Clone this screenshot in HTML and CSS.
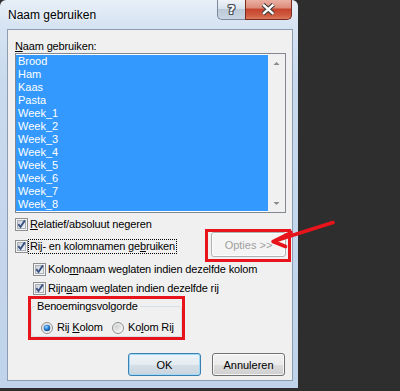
FILE: index.html
```html
<!DOCTYPE html>
<html lang="nl">
<head>
<meta charset="utf-8">
<title>Naam gebruiken</title>
<link rel="stylesheet" href="styles.css">
</head>
<body>
<svg class="defs" width="0" height="0" aria-hidden="true">
  <defs>
    <linearGradient id="cbIn" x1="0" y1="0" x2="1" y2="1">
      <stop offset="0" stop-color="#c9ced6"/>
      <stop offset="1" stop-color="#f6f7f8"/>
    </linearGradient>
    <linearGradient id="rbOut" x1="0" y1="0" x2="1" y2="1">
      <stop offset="0" stop-color="#dcdcdc"/>
      <stop offset="1" stop-color="#fdfdfd"/>
    </linearGradient>
    <radialGradient id="rbDot" cx="0.4" cy="0.35" r="0.75">
      <stop offset="0" stop-color="#a6dcff"/>
      <stop offset="0.45" stop-color="#2b82d6"/>
      <stop offset="1" stop-color="#123f78"/>
    </radialGradient>
    <linearGradient id="rbOff" x1="0" y1="0" x2="1" y2="1">
      <stop offset="0" stop-color="#c7c9cc"/>
      <stop offset="1" stop-color="#f3f3f3"/>
    </linearGradient>
  </defs>
</svg>

<div class="window">
  <div class="titlebar">
    <span class="title">Naam gebruiken</span>
    <div class="caption">
      <span class="cap-help">?</span>
      <span class="cap-close">
        <svg width="47" height="20" viewBox="0 0 47 20">
          <path d="M18.5 4.5 L29 14 M29 4.5 L18.5 14" stroke="#3a3a3a" stroke-width="4.6" fill="none"/>
          <path d="M18.5 4.5 L29 14 M29 4.5 L18.5 14" stroke="#ffffff" stroke-width="2.4" fill="none"/>
        </svg>
      </span>
    </div>
  </div>

  <div class="client">
    <div class="label"><u>N</u>aam gebruiken:</div>

    <div class="listbox">
      <ul class="items">
        <li>Brood</li>
        <li>Ham</li>
        <li>Kaas</li>
        <li>Pasta</li>
        <li>Week_1</li>
        <li>Week_2</li>
        <li>Week_3</li>
        <li>Week_4</li>
        <li>Week_5</li>
        <li>Week_6</li>
        <li>Week_7</li>
        <li>Week_8</li>
      </ul>
      <div class="vscroll">
        <svg width="17" height="17" viewBox="0 0 17 17"><path d="M5.5 11 L8.5 8 L11.5 11 Z" fill="#8a8a8a"/></svg>
        <svg width="17" height="17" viewBox="0 0 17 17"><path d="M5.5 7 L8.5 10 L11.5 7 Z" fill="#8a8a8a"/></svg>
      </div>
    </div>

    <label class="check row1">
      <svg class="cb" width="13" height="13" viewBox="0 0 13 13"><rect x="0.5" y="0.5" width="12" height="12" fill="#f4f4f4" stroke="#8e8f8f"/><rect x="2.5" y="2.5" width="8" height="8" fill="url(#cbIn)" stroke="#aab0b8"/><path d="M3.3 6.2 L5.5 9 L9.9 2.4" fill="none" stroke="#3a5384" stroke-width="1.9"/></svg>
      <span class="txt"><u>R</u>elatief/absoluut negeren</span>
    </label>

    <div class="row2">
      <label class="check">
        <svg class="cb" width="13" height="13" viewBox="0 0 13 13"><rect x="0.5" y="0.5" width="12" height="12" fill="#f4f4f4" stroke="#8e8f8f"/><rect x="2.5" y="2.5" width="8" height="8" fill="url(#cbIn)" stroke="#aab0b8"/><path d="M3.3 6.2 L5.5 9 L9.9 2.4" fill="none" stroke="#3a5384" stroke-width="1.9"/></svg>
        <span class="txt focus">Rij- en kolomnamen ge<u>b</u>ruiken</span>
      </label>
      <div class="mark mark-opties">
        <button class="btn btn-disabled" type="button" disabled>Opties &gt;&gt;</button>
      </div>
    </div>

    <label class="check row3 indent">
      <svg class="cb" width="13" height="13" viewBox="0 0 13 13"><rect x="0.5" y="0.5" width="12" height="12" fill="#f4f4f4" stroke="#8e8f8f"/><rect x="2.5" y="2.5" width="8" height="8" fill="url(#cbIn)" stroke="#aab0b8"/><path d="M3.3 6.2 L5.5 9 L9.9 2.4" fill="none" stroke="#3a5384" stroke-width="1.9"/></svg>
      <span class="txt">Kolo<u>m</u>naam weglaten indien dezelfde kolom</span>
    </label>

    <label class="check row4 indent">
      <svg class="cb" width="13" height="13" viewBox="0 0 13 13"><rect x="0.5" y="0.5" width="12" height="12" fill="#f4f4f4" stroke="#8e8f8f"/><rect x="2.5" y="2.5" width="8" height="8" fill="url(#cbIn)" stroke="#aab0b8"/><path d="M3.3 6.2 L5.5 9 L9.9 2.4" fill="none" stroke="#3a5384" stroke-width="1.9"/></svg>
      <span class="txt">Rijn<u>a</u>am weglaten indien dezelfde rij</span>
    </label>

    <div class="mark mark-group">
      <fieldset class="group">
        <legend>Benoemingsvolgorde</legend>
        <div class="radios">
          <label class="radio r1">
            <svg width="12" height="12" viewBox="0 0 12 12"><circle cx="6" cy="6" r="5.5" fill="url(#rbOut)" stroke="#8e8f8f"/><circle cx="6" cy="6" r="3.3" fill="url(#rbDot)"/></svg>
            <span class="txt">Rij <u>K</u>olom</span>
          </label>
          <label class="radio r2">
            <svg width="12" height="12" viewBox="0 0 12 12"><circle cx="6" cy="6" r="5.5" fill="url(#rbOut)" stroke="#8e8f8f"/><circle cx="6" cy="6" r="3.3" fill="url(#rbOff)"/></svg>
            <span class="txt">Ko<u>l</u>om Rij</span>
          </label>
        </div>
      </fieldset>
    </div>

    <div class="buttons">
      <button class="btn btn-default" type="button">OK</button>
      <button class="btn" type="button">Annuleren</button>
    </div>
  </div>
</div>

<svg class="arrow" width="400" height="391" viewBox="0 0 400 391" aria-hidden="true">
  <path d="M333 222.5 L276 240.5" stroke="#e8141b" stroke-width="3.6" fill="none" stroke-linecap="round"/>
  <path d="M291 232.5 L273 241.5 L285.5 246.5" stroke="#e8141b" stroke-width="3.6" fill="none" stroke-linecap="round" stroke-linejoin="round"/>
</svg>
</body>
</html>
```

FILE: styles.css
```css
html, body {
  margin: 0;
  padding: 0;
}

body {
  width: 400px;
  height: 391px;
  overflow: hidden;
  position: relative;
  background: #2e2e2e;
  font-family: "Liberation Sans", Arial, sans-serif;
  font-size: 11px;
  color: #000;
}

.defs {
  position: absolute;
  width: 0;
  height: 0;
}

.window {
  width: 298px;
  height: 388px;
  box-sizing: border-box;
  padding: 0 5px 0 7px;
  border-radius: 6px 6px 0 0;
  background: linear-gradient(#e7eff8 0, #d6e3f2 26px, #c9daee 80px, #bfd3ea 100%);
  display: flex;
  flex-direction: column;
}

/* title bar */
.titlebar {
  height: 29px;
  flex: none;
  display: flex;
  justify-content: space-between;
  align-items: flex-start;
  padding-left: 1px;
  margin-right: 1px;
}

.title {
  margin-top: 8px;
  font-size: 12px;
  line-height: 14px;
  color: #000;
  text-shadow: 0 0 5px rgba(255, 255, 255, 0.9);
}

.caption {
  display: flex;
}

.cap-help,
.cap-close {
  height: 20px;
  box-sizing: border-box;
  display: flex;
  align-items: center;
  justify-content: center;
}

.cap-help {
  width: 28px;
  border: 1px solid #7d8a9b;
  border-top: none;
  border-right: none;
  border-radius: 0 0 0 5px;
  background: linear-gradient(#eef3f8 0%, #d9e2ec 45%, #bcc9d8 50%, #c9d5e2 100%);
  color: #fff;
  font-family: "DejaVu Sans", sans-serif;
  font-weight: bold;
  font-size: 13px;
  line-height: 18px;
  text-shadow: 1px 0 0 #4a4f57, -1px 0 0 #4a4f57, 0 1px 0 #4a4f57, 0 -1px 0 #4a4f57,
    1px 1px 0 #4a4f57, -1px -1px 0 #4a4f57, 1px -1px 0 #4a4f57, -1px 1px 0 #4a4f57;
}

.cap-close {
  width: 47px;
  border: 1px solid #7a2a1e;
  border-top: none;
  border-radius: 0 0 5px 0;
  background: linear-gradient(#eab0a3 0%, #dc8d79 40%, #c7452f 50%, #cd5a3f 80%, #dc7a5c 100%);
}

.cap-close svg {
  display: block;
  margin-left: -1px;
}

/* client area */
.client {
  height: 352px;
  flex: none;
  box-sizing: border-box;
  border: 1px solid #8d9cb0;
  background: #f0f0f0;
  padding: 10px 6px 4px 7px;
  display: flex;
  flex-direction: column;
  align-items: flex-start;
}

.label {
  height: 13px;
  line-height: 13px;
  letter-spacing: -0.15px;
}

.listbox {
  width: 271px;
  height: 160px;
  box-sizing: border-box;
  border: 1px solid #828790;
  background: #fff;
  padding-top: 1px;
  display: flex;
  align-items: stretch;
}

.items {
  list-style: none;
  margin: 0;
  padding: 0;
  flex: 1;
  align-self: flex-start;
}

.items li {
  height: 13px;
  line-height: 13px;
  padding-left: 2px;
  background: #3399ff;
  color: #fff;
}

.vscroll {
  width: 17px;
  margin-top: -1px;
  background: #f0f0f0;
  display: flex;
  flex-direction: column;
  justify-content: space-between;
}

.vscroll svg {
  display: block;
}

/* checkboxes */
.check {
  display: flex;
  align-items: center;
  height: 13px;
}

.check .cb {
  display: block;
  flex: none;
}

.txt {
  line-height: 13px;
  margin-left: 1px;
  padding: 0 1px;
  white-space: nowrap;
  letter-spacing: -0.15px;
}

.row1 {
  margin-top: 5px;
}

.row2 {
  margin-top: 9px;
  width: 271px;
  display: flex;
  justify-content: space-between;
  align-items: flex-start;
}

.focus {
  outline: 1px dotted #000;
  outline-offset: 0;
  height: 13px;
}

.indent {
  margin-left: 18px;
}

.row3 {
  margin-top: 10px;
}

.row4 {
  margin-top: 6px;
}

/* red annotation frames */
.mark {
  box-sizing: border-box;
  border: 3px solid #e8141b;
}

.mark-opties {
  width: 86px;
  height: 33px;
  margin: -11px -5px -9px 0;
  padding: 0 0 0 3px;
}

.mark-group {
  width: 157px;
  height: 44px;
  margin: 1px 0 0 13px;
  padding: 0;
}

/* group box */
.group {
  margin: 1px 0 0 0;
  padding: 0;
  height: 37px;
  box-sizing: border-box;
  border: 1px solid #d5dfe5;
  border-radius: 3px;
  min-width: 0;
}

.group legend {
  margin-left: 3px;
  padding: 0 2px;
  line-height: 13px;
  font-size: 11px;
  letter-spacing: -0.15px;
}

.radios {
  display: flex;
  align-items: center;
  height: 13px;
  margin: 8px 0 0 9px;
}

.radio {
  display: flex;
  align-items: center;
}

.radio svg {
  display: block;
  flex: none;
}

.radio .txt {
  margin-left: 3px;
}

.r1 {
  width: 71px;
}

/* buttons */
.btn {
  box-sizing: border-box;
  width: 73px;
  height: 23px;
  padding: 0;
  margin: 0;
  font-family: "Liberation Sans", Arial, sans-serif;
  font-size: 11px;
  color: #000;
  border: 1px solid #707070;
  border-radius: 3px;
  background: linear-gradient(#f2f2f2 0%, #ebebeb 50%, #dddddd 50%, #cfcfcf 100%);
  box-shadow: inset 0 0 0 1px rgba(255, 255, 255, 0.75);
}

.btn-default {
  border-color: #3c7fb1;
  background: linear-gradient(#eef4f8 0%, #e4ecf2 50%, #d5dfe7 50%, #c9d5df 100%);
  box-shadow: inset 0 0 0 1px #9cdaf8;
}

.btn-disabled {
  width: 75px;
  height: 25px;
  color: #a0a0a0;
  border-color: #adb2b5;
  background: #f4f4f4;
  box-shadow: inset 0 0 0 1px #fcfcfc;
}

.buttons {
  align-self: stretch;
  margin-top: 13px;
  padding-right: 1px;
  display: flex;
  justify-content: flex-end;
  gap: 11px;
}

/* annotation arrow overlay */
.arrow {
  position: absolute;
  left: 0;
  top: 0;
  pointer-events: none;
}
```
